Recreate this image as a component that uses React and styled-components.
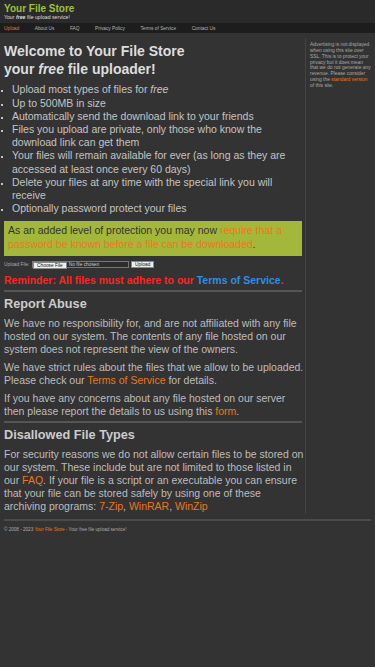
import React from 'react'
import styled, { createGlobalStyle } from 'styled-components'

const GlobalStyle = createGlobalStyle`
  body {
    margin: 0;
    background: #333333;
    font-family: 'Liberation Sans', Arial, Helvetica, sans-serif;
    color: #bbbbbb;
  }
`

const features = [
  <>Upload most types of files for <em>free</em></>,
  'Up to 500MB in size',
  'Automatically send the download link to your friends',
  'Files you upload are private, only those who know the download link can get them',
  'Your files will remain available for ever (as long as they are accessed at least once every 60 days)',
  'Delete your files at any time with the special link you will receive',
  'Optionally password protect your files',
]

const navItems = ['Upload', 'About Us', 'FAQ', 'Privacy Policy', 'Terms of Service', 'Contact Us']

export default function App() {
  return (
    <>
      <GlobalStyle />
      <Header>
        <SiteTitle>Your File Store</SiteTitle>
        <Tagline>
          Your <b><i>free</i></b> file upload service!
        </Tagline>
      </Header>
      <Nav>
        {navItems.map((item, i) => (
          <NavLink key={item} $active={i === 0}>
            {item}
          </NavLink>
        ))}
      </Nav>
      <Wrap>
        <Main>
          <Welcome>
            Welcome to Your File Store
            <br />
            your <i>free</i> file uploader!
          </Welcome>
          <Features>
            {features.map((f, i) => (
              <li key={i}>{f}</li>
            ))}
          </Features>
          <Notice>
            As an added level of protection you may now{' '}
            <Link>require that a password be known before a file can be downloaded</Link>.
          </Notice>
          <UploadRow>
            <UploadLabel>Upload File:</UploadLabel>
            <FileField>
              <FileButton>Choose File</FileButton>
              <FileName>No file chosen</FileName>
            </FileField>
            <FileButton as="button">Upload</FileButton>
          </UploadRow>
          <Reminder>
            Reminder: All files must adhere to our <Blue>Terms of Service</Blue>.
          </Reminder>
          <Rule />
          <Heading>Report Abuse</Heading>
          <Para>
            We have no responsibility for, and are not affiliated with any file hosted on our
            system. The contents of any file hosted on our system does not represent the view
            of the owners.
          </Para>
          <Para>
            We have strict rules about the files that we allow to be uploaded. Please check our{' '}
            <Link>Terms of Service</Link> for details.
          </Para>
          <Para>
            If you have any concerns about any file hosted on our server then please report the
            details to us using this <Link>form</Link>.
          </Para>
          <Rule />
          <Heading>Disallowed File Types</Heading>
          <Para>
            For security reasons we do not allow certain files to be stored on our system.
            These include but are not limited to those listed in our <Link>FAQ</Link>. If your
            file is a script or an executable you can ensure that your file can be stored
            safely by using one of these archiving programs: <Link>7-Zip</Link>,{' '}
            <Link>WinRAR</Link>, <Link>WinZip</Link>
          </Para>
        </Main>
        <Sidebar>
          Advertising is not displayed when using this site over SSL. This is to protect your
          privacy but it does mean that we do not generate any revenue. Please consider using
          the <Link>standard version</Link> of this site.
        </Sidebar>
      </Wrap>
      <Footer>
        © 2008 - 2023 <Link>Your File Store</Link> - Your free file upload service!
      </Footer>
    </>
  )
}

const Header = styled.header`
  background: #2a2a2a;
  height: 23px;
  padding: 3px 4px 0;
  box-sizing: border-box;
`

const SiteTitle = styled.div`
  font-size: 10px;
  line-height: 11px;
  font-weight: bold;
  color: #9fc236;
`

const Tagline = styled.div`
  font-size: 5.2px;
  line-height: 6px;
  color: #dddddd;
`

const Nav = styled.nav`
  display: flex;
  align-items: center;
  gap: 15.5px;
  height: 10px;
  padding: 0 4px;
  background: #1d1d1d;
  font-size: 4.8px;
`

const NavLink = styled.span`
  color: ${(p) => (p.$active ? '#e0782a' : '#b5b5b5')};
`

const Wrap = styled.div`
  display: flex;
  padding: 0 4px;
`

const Main = styled.main`
  width: 300px;
  flex-shrink: 0;
  padding-bottom: 1px;
`

const Sidebar = styled.aside`
  margin: 5px 0 0 1px;
  border-left: 1px solid #444444;
  padding: 4px 0 0 4px;
  width: 62px;
  font-size: 4.9px;
  line-height: 5.85px;
  color: #aaaaaa;
`

const Welcome = styled.h1`
  margin: 9px 0 0;
  font-size: 14px;
  line-height: 18px;
  font-weight: bold;
  color: #dddddd;
`

const Features = styled.ul`
  margin: 5.4px 0 0;
  padding-left: 8px;
  list-style: square;
  font-size: 10.5px;
  line-height: 13.2px;
  color: #c4c4c4;

  li::marker {
    font-size: 7px;
  }
`

const Notice = styled.p`
  width: 298px;
  box-sizing: border-box;
  margin: 5.4px 0 0;
  padding: 2px 4px 5px;
  background: #a3b83a;
  font-size: 10.5px;
  line-height: 14px;
  color: #333333;
`

const Link = styled.span`
  color: #e8781e;
`

const UploadRow = styled.div`
  display: flex;
  align-items: center;
  margin-top: 4px;
  height: 9px;
  font-size: 4.8px;
`

const UploadLabel = styled.span`
  color: #aaaaaa;
  margin-right: 2.5px;
`

const FileField = styled.span`
  display: flex;
  align-items: stretch;
  width: 97px;
  height: 7.5px;
  border: 0.5px solid #777777;
  margin-right: 2px;
  box-sizing: border-box;
`

const FileButton = styled.span`
  display: inline-flex;
  align-items: center;
  padding: 0 3px;
  height: 7.5px;
  box-sizing: border-box;
  background: #efefef;
  border: 0.5px solid #888888;
  color: #111111;
  font: inherit;
  font-size: 4.8px;
  margin: 0;
`

const FileName = styled.span`
  display: flex;
  align-items: center;
  padding-left: 2px;
  color: #cccccc;
  background: #2e2e2e;
  flex: 1;
`

const Reminder = styled.p`
  margin: 5px 0 0;
  font-size: 10.5px;
  line-height: 13px;
  font-weight: bold;
  color: #ff2424;
`

const Blue = styled.span`
  color: #2f8fe0;
`

const Rule = styled.hr`
  width: 298px;
  margin: 3.5px 0 0;
  border: 0;
  border-top: 2px solid #555555;
`

const Heading = styled.h2`
  margin: 3.5px 0 0;
  font-size: 12.7px;
  line-height: 16px;
  font-weight: bold;
  color: #cccccc;
`

const Para = styled.p`
  margin: 5px 0 0;
  font-size: 10.5px;
  line-height: 13px;
  color: #bdbdbd;
`

const Footer = styled.footer`
  margin: 5px 4px 0;
  border-top: 2px solid #4a4a4a;
  padding-top: 6.5px;
  font-size: 4.6px;
  line-height: 6px;
  color: #aaaaaa;
`
